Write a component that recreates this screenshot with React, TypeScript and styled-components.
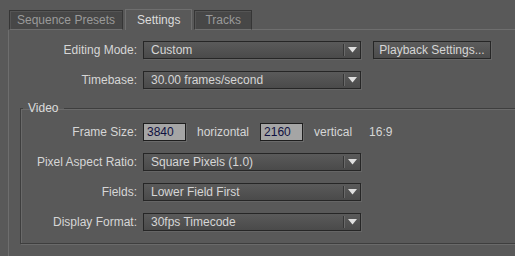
import React from "react";
import styled, { createGlobalStyle } from "styled-components";

const GlobalStyle = createGlobalStyle`
  html, body {
    margin: 0;
    padding: 0;
    background: #595959;
  }
  body {
    font-family: "Liberation Sans", Arial, sans-serif;
    font-size: 12px;
    color: #d6d6d6;
  }
`;

type Row = { label: string; value: string };

const Arrow = () => (
  <svg width="9" height="6" viewBox="0 0 9 6">
    <path d="M0 0 H9 L4.5 5.5 Z" fill="#e0e0e0" />
  </svg>
);

const Select = ({ value }: { value: string }) => (
  <SSelect>
    <SSelectText>{value}</SSelectText>
    <SSelectSep />
    <SSelectArrow>
      <Arrow />
    </SSelectArrow>
  </SSelect>
);

export default function App() {
  const videoRows: Row[] = [
    { label: "Pixel Aspect Ratio:", value: "Square Pixels (1.0)" },
    { label: "Fields:", value: "Lower Field First" },
    { label: "Display Format:", value: "30fps Timecode" },
  ];
  return (
    <SPage>
      <GlobalStyle />
      <STabBar>
        <STab $pad={7}>Sequence Presets</STab>
        <STab $active $pad={11}>Settings</STab>
        <STab $pad={10}>Tracks</STab>
        <STabFill />
      </STabBar>
      <SPanel>
        <SForm>
          <SLabel>Editing Mode:</SLabel>
          <SField>
            <Select value="Custom" />
            <SButton>Playback Settings...</SButton>
          </SField>
          <SLabel>Timebase:</SLabel>
          <SField>
            <Select value="30.00 frames/second" />
          </SField>
        </SForm>
        <SGroup>
          <SLegend>Video</SLegend>
          <SForm $inGroup>
            <SLabel>Frame Size:</SLabel>
            <SField>
              <SInput>3840</SInput>
              <SUnit>horizontal</SUnit>
              <SInput>2160</SInput>
              <SUnit>vertical</SUnit>
              <SUnit $ratio>16:9</SUnit>
            </SField>
            {videoRows.map((r) => (
              <React.Fragment key={r.label}>
                <SLabel>{r.label}</SLabel>
                <SField>
                  <Select value={r.value} />
                </SField>
              </React.Fragment>
            ))}
          </SForm>
        </SGroup>
      </SPanel>
    </SPage>
  );
}

const SPage = styled.div`
  width: 515px;
  height: 256px;
  overflow: hidden;
  background: #595959;
  padding-top: 9px;
  box-sizing: border-box;
`;

const STabBar = styled.div`
  display: flex;
  align-items: flex-end;
  padding-left: 8px;
  height: 21px;
`;

const STab = styled.div<{ $active?: boolean; $pad: number }>`
  height: ${(p) => (p.$active ? "21px" : "20px")};
  box-sizing: border-box;
  display: flex;
  align-items: center;
  padding: 0 ${(p) => p.$pad}px;
  margin-left: ${(p) => (p.$active ? "2px" : "1px")};
  margin-right: ${(p) => (p.$active ? "1px" : "0")};
  background: ${(p) => (p.$active ? "#595959" : "#474747")};
  border: 1px solid ${(p) => (p.$active ? "#6e6e6e" : "#363636")};
  border-bottom: ${(p) => (p.$active ? "none" : "1px solid #6e6e6e")};
  color: ${(p) => (p.$active ? "#dcdcdc" : "#9a9a9a")};
  box-shadow: ${(p) => (p.$active ? "none" : "inset 1px 1px 0 #555")};
  white-space: nowrap;
`;

const STabFill = styled.div`
  flex: 1;
  border-bottom: 1px solid #6e6e6e;
`;

const SPanel = styled.div`
  margin-left: 8px;
  border-left: 1px solid #6e6e6e;
  padding: 11px 0 0 0;
  height: 240px;
`;

const SForm = styled.div<{ $inGroup?: boolean }>`
  display: grid;
  grid-template-columns: ${(p) => (p.$inGroup ? "116px" : "128px")} auto;
  column-gap: 6px;
  row-gap: 12px;
  align-items: center;
`;

const SLabel = styled.div`
  text-align: right;
  white-space: nowrap;
`;

const SField = styled.div`
  display: flex;
  align-items: center;
`;

const SSelect = styled.div`
  width: 218px;
  height: 18px;
  box-sizing: border-box;
  display: flex;
  align-items: center;
  border: 1px solid #262626;
  background: linear-gradient(#5a5a5a, #4a4a4a);
  box-shadow: 1px 1px 0 #656565;
`;

const SSelectText = styled.div`
  flex: 1;
  padding-left: 7px;
  white-space: nowrap;
`;

const SSelectSep = styled.div`
  width: 1px;
  height: 12px;
  background: #363636;
  box-shadow: 1px 0 0 #6a6a6a;
`;

const SSelectArrow = styled.div`
  width: 16px;
  display: flex;
  justify-content: center;
  align-items: center;
`;

const SButton = styled.div`
  margin-left: 12px;
  width: 118px;
  height: 18px;
  box-sizing: border-box;
  display: flex;
  align-items: center;
  justify-content: center;
  border: 1px solid #262626;
  background: linear-gradient(#5c5c5c, #4c4c4c);
  box-shadow: 1px 1px 0 #656565;
  white-space: nowrap;
`;

const SGroup = styled.fieldset`
  margin: 12px 0 0 11px;
  padding: 8px 0 0 0;
  height: 143px;
  box-sizing: border-box;
  margin-right: -20px;
  border: 1px solid #3e3e3e;
  box-shadow: 1px 1px 0 #6a6a6a, inset 1px 1px 0 #6a6a6a;
`;

const SLegend = styled.legend`
  padding: 0 6px 0 5px;
  margin-left: 2px;
  color: #dcdcdc;
`;

const SInput = styled.div`
  width: 43px;
  height: 18px;
  box-sizing: border-box;
  border: 1px solid #1e1e1e;
  background: #a5a5a5;
  color: #101040;
  padding-left: 3px;
  display: flex;
  align-items: center;
  box-shadow: 1px 1px 0 #6a6a6a;
`;

const SUnit = styled.div<{ $ratio?: boolean }>`
  margin: 0 ${(p) => (p.$ratio ? "0" : "11px")} 0 ${(p) => (p.$ratio ? "6px" : "11px")};
  white-space: nowrap;
`;
